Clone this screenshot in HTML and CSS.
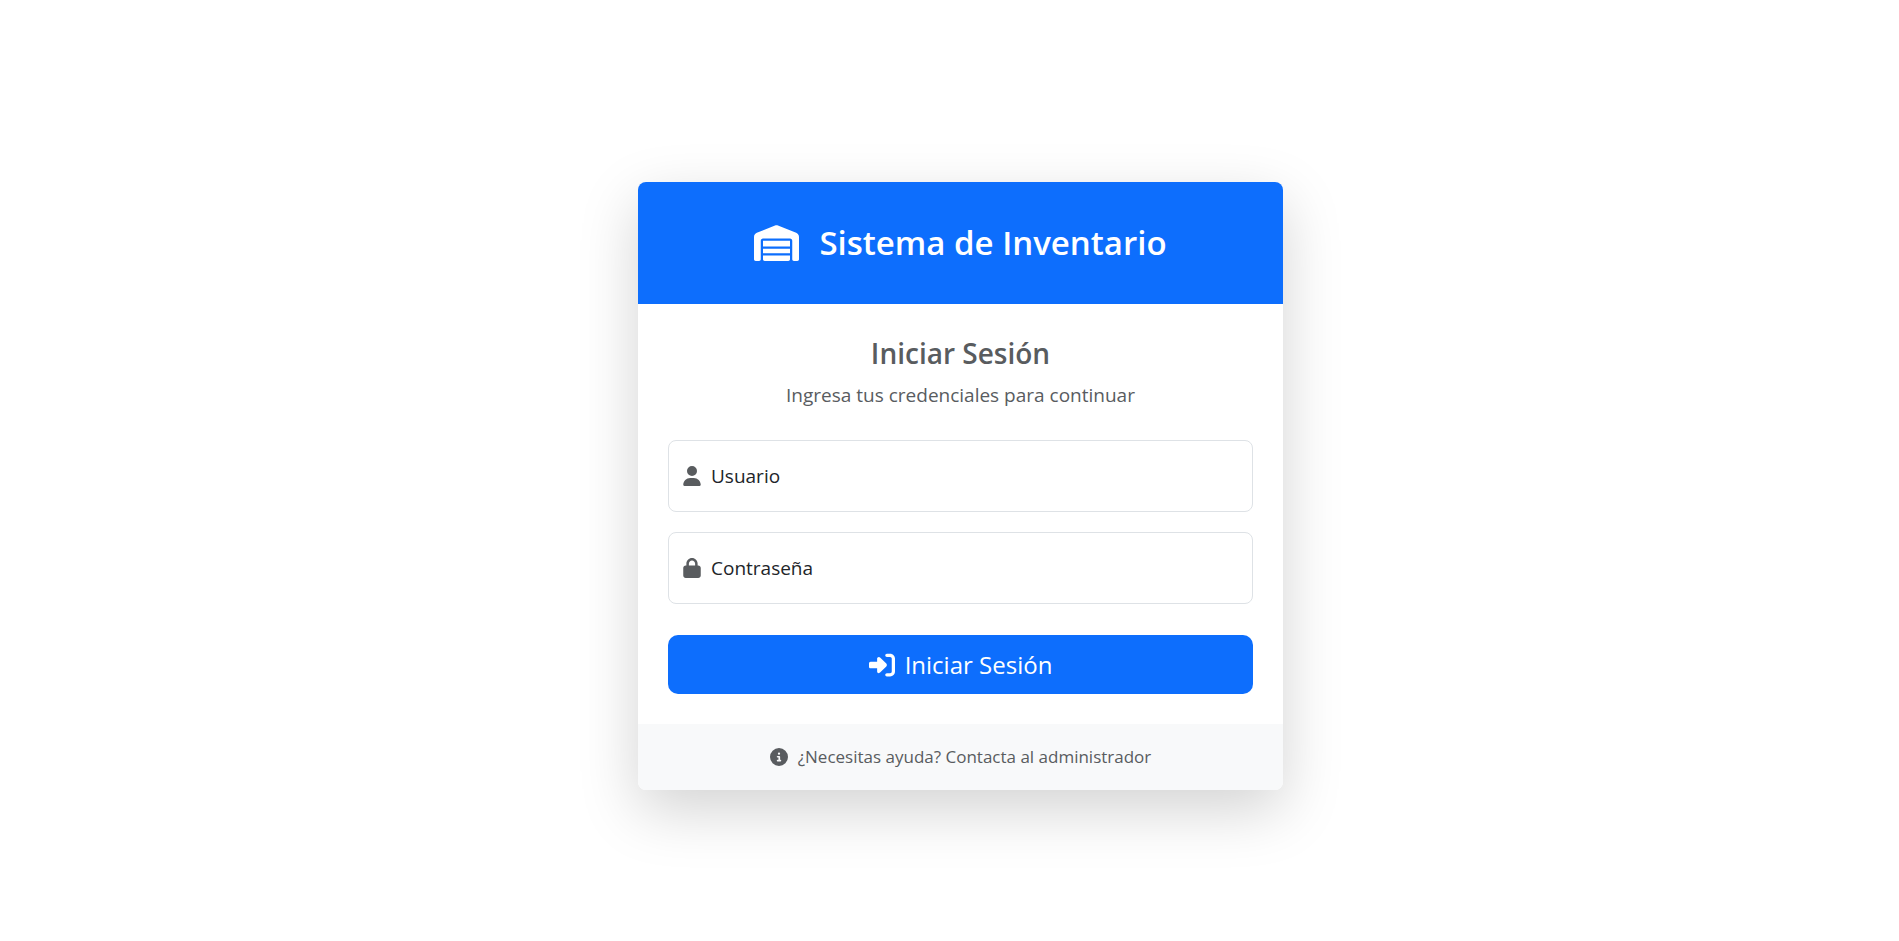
FILE: index.html
```html
<!DOCTYPE html>
<html lang="es">
<head>
  <meta charset="utf-8">
  <meta name="viewport" content="width=device-width, initial-scale=1">
  <title>Sistema de Inventario</title>
  <link rel="stylesheet" href="styles.css">
</head>
<body>
  <main class="page">
    <section class="card">
      <header class="card-header">
        <svg class="icon icon-brand" viewBox="0 0 640 512" aria-hidden="true"><path d="M0 488V171.3c0-26.2 15.9-49.7 40.2-59.4L308.1 4.8c7.6-3.1 16.1-3.1 23.8 0L599.8 111.9c24.3 9.7 40.2 33.3 40.2 59.4V488c0 13.3-10.7 24-24 24H568c-13.3 0-24-10.7-24-24V224c0-17.7-14.3-32-32-32H128c-17.7 0-32 14.3-32 32V488c0 13.3-10.7 24-24 24H24c-13.3 0-24-10.7-24-24zm488 24l-336 0c-13.3 0-24-10.7-24-24V432H512l0 56c0 13.3-10.7 24-24 24zM128 400V336H512v64H128zm0-96V224H512l0 80H128z"/></svg>
        <h1 class="brand">Sistema de Inventario</h1>
      </header>
      <div class="card-body">
        <div class="intro">
          <h2 class="title">Iniciar Sesión</h2>
          <p class="subtitle">Ingresa tus credenciales para continuar</p>
        </div>
        <form class="form">
          <div class="field">
            <input class="input" id="usuario" name="usuario" type="text" autocomplete="username">
            <label class="label" for="usuario">
              <svg class="icon icon-field" viewBox="0 0 448 512" aria-hidden="true"><path d="M224 256A128 128 0 1 0 224 0a128 128 0 1 0 0 256zm-45.7 48C79.8 304 0 383.8 0 482.3C0 498.7 13.3 512 29.7 512H418.3c16.4 0 29.7-13.3 29.7-29.7C448 383.8 368.2 304 269.7 304H178.3z"/></svg>
              <span>Usuario</span>
            </label>
          </div>
          <div class="field">
            <input class="input" id="contrasena" name="contrasena" type="password" autocomplete="current-password">
            <label class="label" for="contrasena">
              <svg class="icon icon-field" viewBox="0 0 448 512" aria-hidden="true"><path d="M144 144v48H304V144c0-44.2-35.8-80-80-80s-80 35.8-80 80zM80 192V144C80 64.5 144.5 0 224 0s144 64.5 144 144v48h16c35.3 0 64 28.7 64 64V448c0 35.3-28.7 64-64 64H64c-35.3 0-64-28.7-64-64V256c0-35.3 28.7-64 64-64H80z"/></svg>
              <span>Contraseña</span>
            </label>
          </div>
          <button class="submit" type="submit">
            <svg class="icon icon-submit" viewBox="0 0 512 512" aria-hidden="true"><path d="M217.9 105.9L340.7 228.7c7.2 7.2 11.3 17.1 11.3 27.3s-4.1 20.1-11.3 27.3L217.9 406.1c-6.4 6.4-15 9.9-24 9.9c-18.7 0-33.9-15.2-33.9-33.9l0-62.1L32 320c-17.7 0-32-14.3-32-32l0-64c0-17.7 14.3-32 32-32l128 0 0-62.1c0-18.7 15.2-33.9 33.9-33.9c9 0 17.6 3.6 24 9.9zM352 416l64 0c17.7 0 32-14.3 32-32l0-256c0-17.7-14.3-32-32-32l-64 0c-17.7 0-32-14.3-32-32s14.3-32 32-32l64 0c53 0 96 43 96 96l0 256c0 53-43 96-96 96l-64 0c-17.7 0-32-14.3-32-32s14.3-32 32-32z"/></svg>
            <span>Iniciar Sesión</span>
          </button>
        </form>
      </div>
      <footer class="card-footer">
        <svg class="icon icon-info" viewBox="0 0 512 512" aria-hidden="true"><path d="M256 512A256 256 0 1 0 256 0a256 256 0 1 0 0 512zM216 336h24V272H216c-13.3 0-24-10.7-24-24s10.7-24 24-24h48c13.3 0 24 10.7 24 24v88h8c13.3 0 24 10.7 24 24s-10.7 24-24 24H216c-13.3 0-24-10.7-24-24s10.7-24 24-24zm40-208a32 32 0 1 1 0 64 32 32 0 1 1 0-64z"/></svg>
        <span>¿Necesitas ayuda? Contacta al administrador</span>
      </footer>
    </section>
  </main>
</body>
</html>
```
FILE: styles.css
```css
*,
*::before,
*::after {
  box-sizing: border-box;
}

body {
  margin: 0;
  background: #fff;
  color: #212529;
  font-family: "Segoe UI", "Open Sans", "Noto Sans", sans-serif;
  font-size: 19px;
  line-height: 30px;
}

.page {
  display: flex;
  align-items: center;
  justify-content: center;
  min-height: 100vh;
  padding: 31px 16px 0 38px;
}

.card {
  width: 100%;
  max-width: 645px;
  border-radius: 8px;
  background: #fff;
  box-shadow: 0 20px 60px rgba(0, 0, 0, 0.175);
  overflow: hidden;
}

.icon {
  flex: none;
  fill: currentColor;
}

.card-header {
  display: flex;
  align-items: center;
  justify-content: center;
  gap: 20px;
  padding: 40px 20px;
  background: #0d6efd;
  color: #fff;
}

.icon-brand {
  width: 45px;
  height: 36px;
}

.brand {
  margin: 0;
  font-size: 33px;
  font-weight: 600;
  line-height: 42px;
}

.card-body {
  padding: 30px;
}

.intro {
  margin-bottom: 30px;
  color: #595c5f;
  text-align: center;
}

.title {
  margin: 0 0 8px;
  font-size: 28px;
  font-weight: 600;
  line-height: 38px;
}

.subtitle {
  margin: 0;
}

.form {
  display: flex;
  flex-direction: column;
  gap: 20px;
}

.field {
  position: relative;
}

.input {
  display: block;
  width: 100%;
  height: 72px;
  padding: 20px 15px;
  border: 1px solid #dee2e6;
  border-radius: 8px;
  background: #fff;
  color: inherit;
  font: inherit;
}

.label {
  position: absolute;
  inset: 0 auto 0 15px;
  display: flex;
  align-items: center;
  gap: 10px;
}

.icon-field {
  width: 18px;
  height: 20px;
  color: #595c5f;
}

.submit {
  display: flex;
  align-items: center;
  justify-content: center;
  gap: 10px;
  margin-top: 11px;
  padding: 14px 20px;
  border: 0;
  border-radius: 10px;
  background: #0d6efd;
  color: #fff;
  font: inherit;
  font-size: 24px;
  line-height: 31px;
}

.icon-submit {
  width: 26px;
  height: 26px;
}

.card-footer {
  display: flex;
  align-items: center;
  justify-content: center;
  gap: 10px;
  padding: 18px 20px;
  background: #f8f9fa;
  color: #595c5f;
  font-size: 17px;
}

.icon-info {
  width: 18px;
  height: 18px;
}
```
